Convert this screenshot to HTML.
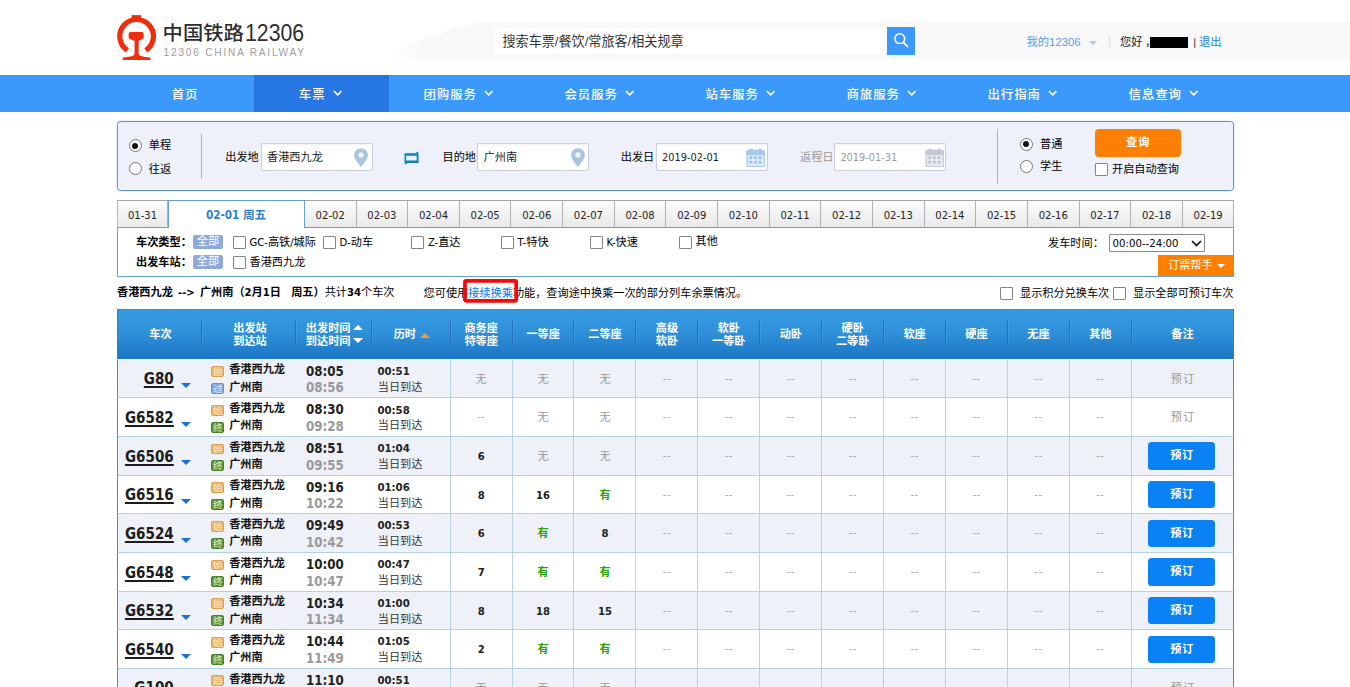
<!DOCTYPE html><html lang="zh-CN"><head><meta charset="utf-8"><title>车票预订 | 中国铁路12306</title><style>
*{box-sizing:border-box;margin:0;padding:0}
html,body{width:1350px;height:687px;overflow:hidden;background:#fff}
body{font-family:"DejaVu Sans Condensed","Liberation Sans","Noto Sans CJK SC",sans-serif;font-size:11.17px;color:#000;position:relative}
.a{position:absolute;white-space:nowrap;line-height:16px}
.ls{font-family:"Liberation Sans","Noto Sans CJK SC",sans-serif}
b,.b{font-weight:bold}
#band{left:380px;top:21.7px;width:970px;height:38px}
#sinp{left:494px;top:27.6px;width:394px;height:26.6px;background:#fff;font-size:13.1px;line-height:28.6px;padding-left:8.5px;color:#333}
#sbtn{left:887px;top:27px;width:28px;height:27.8px;background:#3b99fc}
#nav{left:0;top:75px;width:1350px;height:37px;background:#3b99fc}
#nav .on{position:absolute;left:254px;top:0;width:135px;height:37px;background:#2676e3}
#nav .i{position:absolute;top:0;height:37px;line-height:40.6px;padding-right:2px;color:#fff;font-size:12.4px;letter-spacing:0.9px;font-weight:500;text-align:center;white-space:nowrap}
#nav svg{display:inline-block;vertical-align:middle;margin-left:7.3px;position:relative;top:-2.8px}
#form{left:117px;top:121px;width:1117px;height:69.5px;background:linear-gradient(#eef1f9 0,#eef1f9 88%,#f3f4f8 100%);border:1px solid #5f95c4;border-radius:3.5px;box-shadow:0 0 1.5px rgba(95,149,196,.7)}
.radio{width:13px;height:13px;border:1px solid #767676;border-radius:50%;background:#fff}
.radio.ck:after{content:"";position:absolute;left:2.5px;top:2.5px;width:6px;height:6px;border-radius:50%;background:#111}
.cb{width:13px;height:12.6px;border:1px solid #858585;background:#fff;border-radius:1px;margin-top:0.7px}
.inp{height:27.6px;width:112px;background:#fff;border:1px solid #cbd0d8;border-radius:2px;line-height:27.6px;padding-left:5.5px;color:#222;box-shadow:inset 0 1px 2px rgba(0,0,0,.06)}
.vdiv{width:1px;background:#8fbfdc}
#tabs{left:117px;top:200px;width:1117px;height:28px}
.tab{position:absolute;top:0;height:28px;border:1px solid #b0b2b6;border-top-color:#a2a4a8;border-left:none;border-bottom:1px solid #659fce;background:linear-gradient(#fcfcfc,#e9e9e9);text-align:center;line-height:29.6px;font-size:11.17px;color:#222}
.tab.on{top:0;height:28px;background:#fff;border:1px solid #659fce;border-bottom:none;color:#2d7fcd;font-weight:bold;font-size:11.6px;line-height:29px}
#filter{left:117px;top:227.5px;width:1117px;height:49px;border:1px solid #659fce;border-top:none;background:#fff}
.all{background:#8ea9dc;color:#fff;width:30.5px;height:13.8px;line-height:13.8px;text-align:center;border-radius:2px}
#thead{left:117px;top:309.4px;width:1117px;height:50.3px;background:linear-gradient(#2e8fdb 0,#379be3 5%,#2f8fd9 48%,#1d77c5 96%,#1a72c0 100%);border-left:1px solid #2a7fc6;border-right:1px solid #2a7fc6}
.th{position:absolute;color:#fff;font-weight:bold;text-align:center;line-height:13px;white-space:nowrap;font-size:11.17px}
.hd{position:absolute;top:10.5px;height:24.5px;width:1px;background:#2670b6;box-shadow:1px 0 0 rgba(120,190,240,.22)}
.row{position:absolute;left:117px;width:1117px;height:39.65px;border-top:1px solid #b4d0e3;border-left:1.5px solid #3a8fd0;border-right:1.5px solid #3a8fd0}
.row.o{background:#eef1f8}
.row .vl{position:absolute;top:0;height:100%;width:1px;background:#b9d3e4}
.tn{position:absolute;right:1059.2px;top:9.6px;font-weight:bold;font-size:15.0px;letter-spacing:0.05px;line-height:20px;text-decoration:underline;text-decoration-thickness:1.7px;text-underline-offset:1.5px;color:#1c1c1c;white-space:nowrap}
.dd{position:absolute;left:63.3px;top:23.4px;width:0;height:0;border-left:5.3px solid transparent;border-right:5.3px solid transparent;border-top:5.6px solid #1b70d8}
.ic{position:absolute;left:93.4px;width:12.7px;height:10.9px;border-radius:2px;color:#fff;font-size:9.6px;line-height:8px;text-align:center;overflow:hidden;font-family:"Noto Sans CJK SC",sans-serif}
.ic.s{background:#ecb66c;border:1px solid #d9a050;color:#fbe6c4}
.ic.g{background:#7fa8ea;border:1px solid #6590dc;color:#e4eeff}
.ic.z{background:#5c9636;border:1px solid #47802a;color:#e2f2d0}
.st{position:absolute;left:111.2px;font-weight:bold;line-height:14px;white-space:nowrap;color:#111}
.t1{position:absolute;left:188px;top:4.0px;font-weight:bold;font-size:13.2px;line-height:16px;color:#222}
.t2{position:absolute;left:188px;top:20.8px;font-weight:bold;font-size:13.2px;line-height:16px;color:#999}
.d1{position:absolute;left:259.4px;top:5.2px;font-weight:bold;font-size:11.3px;line-height:14px;color:#222}
.d2{position:absolute;left:259.8px;top:21.0px;line-height:14px;color:#333}
.c{position:absolute;top:0;height:38.6px;line-height:39px;text-align:center;width:62px;color:#222}
.c.n{color:#999}
.c.d{color:#a8a8a8;letter-spacing:0.4px;line-height:37.4px}
.c.y{color:#26a306;font-weight:bold}
.c.k{font-weight:bold}
.bk{position:absolute;left:1030.4px;top:5.3px;width:67px;height:27.4px;background:#0a82f5;border-radius:3.5px;color:#fff;font-weight:bold;text-align:center;line-height:27.5px;letter-spacing:0.5px}
.bk0{position:absolute;left:1014px;width:102px;top:0;line-height:40.5px;text-align:center;color:#999;letter-spacing:1px}
</style></head><body>
<svg class="a" style="left:117px;top:15px" width="39" height="45" viewBox="0 0 39 45"><g fill="#f02e0f"><path d="M14.6 0.1h9.4v3h-9.4z"/><path d="M10.45 35.4A16.8 16.8 0 1 1 28.75 35.4" fill="none" stroke="#f02e0f" stroke-width="5.2"/><path d="M11.6 19Q11.6 17 13.6 17L24.7 17Q26.7 17 26.7 19L26.7 22.3Q26.7 24.3 24.5 24.6L21.7 26L21.7 39Q22 41.8 33.6 42.6L33.6 45L5.6 45L5.6 42.6Q17.3 41.8 17.6 39L17.6 26L13.8 24.6Q11.6 24.3 11.6 22.3Z"/></g></svg>
<div class="a ls" style="left:162.6px;top:18.6px;font-size:20.3px;line-height:28px;color:#2e2e2e;font-weight:500;transform:scaleY(0.93);transform-origin:0 50%">中国铁路</div>
<div class="a ls" style="left:244.6px;top:18.6px;font-size:23px;line-height:28px;color:#2e2e2e;transform:scaleX(0.925);transform-origin:0 50%">12306</div>
<div class="a ls" style="left:163.6px;top:45.4px;font-size:10.1px;line-height:16px;color:#9c9c9c;letter-spacing:1.8px">12306 CHINA RAILWAY</div>
<svg class="a" id="band" width="970" height="38" viewBox="0 0 970 38"><defs><linearGradient id="bg1" x1="0" y1="0" x2="1" y2="0"><stop offset="0" stop-color="#f8f8f8" stop-opacity="0"/><stop offset="0.035" stop-color="#f8f8f8" stop-opacity="1"/><stop offset="1" stop-color="#f8f8f8"/></linearGradient></defs><path d="M8 37.5L15 28.5C40 20 68 6 98 0L970 0L970 37.5Z" fill="url(#bg1)"/></svg>
<div class="a ls" id="sinp" style="">搜索车票/餐饮/常旅客/相关规章</div>
<div class="a" id="sbtn"><svg width="27.5" height="27.5" viewBox="0 0 27.5 27.5"><circle cx="12.8" cy="11.7" r="4.9" fill="none" stroke="#fff" stroke-width="1.5"/><path d="M16.4 15.4L20.4 19.4" stroke="#fff" stroke-width="1.8" stroke-linecap="round"/></svg></div>
<div class="a ls" style="left:1026.5px;top:33.8px;color:#5b9ee6;font-size:11.3px">我的12306</div>
<div class="a" style="left:1088.5px;top:40.5px;width:0;height:0;border-left:4.5px solid transparent;border-right:4.5px solid transparent;border-top:4.5px solid #a9c9f0"></div>
<div class="a " style="left:1108.5px;top:36px;width:1px;height:11px;background:#dcdcdc"></div>
<div class="a ls" style="left:1120px;top:33.8px;color:#222;font-size:11.3px">您好<span style="margin-left:2.4px">，</span></div>
<div class="a " style="left:1150px;top:36.6px;width:38px;height:11.3px;background:#000"></div>
<div class="a ls" style="left:1193.3px;top:33.8px;color:#333;font-size:11.3px">|</div>
<div class="a ls" style="left:1199px;top:33.8px;color:#1d82dc;font-size:11.3px">退出</div>
<div class="a" id="nav"><div class="on"></div><div class="i ls" style="left:118px;width:136px">首页</div><div class="i ls" style="left:254px;width:135px">车票<svg width="9.4" height="6.5" viewBox="0 0 9.4 6.5"><path d="M0.9 1L4.7 4.9L8.5 1" fill="none" stroke="#fff" stroke-width="1.6"/></svg></div><div class="i ls" style="left:389px;width:141px">团购服务<svg width="9.4" height="6.5" viewBox="0 0 9.4 6.5"><path d="M0.9 1L4.7 4.9L8.5 1" fill="none" stroke="#fff" stroke-width="1.6"/></svg></div><div class="i ls" style="left:530px;width:141px">会员服务<svg width="9.4" height="6.5" viewBox="0 0 9.4 6.5"><path d="M0.9 1L4.7 4.9L8.5 1" fill="none" stroke="#fff" stroke-width="1.6"/></svg></div><div class="i ls" style="left:671px;width:141px">站车服务<svg width="9.4" height="6.5" viewBox="0 0 9.4 6.5"><path d="M0.9 1L4.7 4.9L8.5 1" fill="none" stroke="#fff" stroke-width="1.6"/></svg></div><div class="i ls" style="left:812px;width:141px">商旅服务<svg width="9.4" height="6.5" viewBox="0 0 9.4 6.5"><path d="M0.9 1L4.7 4.9L8.5 1" fill="none" stroke="#fff" stroke-width="1.6"/></svg></div><div class="i ls" style="left:953px;width:141px">出行指南<svg width="9.4" height="6.5" viewBox="0 0 9.4 6.5"><path d="M0.9 1L4.7 4.9L8.5 1" fill="none" stroke="#fff" stroke-width="1.6"/></svg></div><div class="i ls" style="left:1094px;width:141px">信息查询<svg width="9.4" height="6.5" viewBox="0 0 9.4 6.5"><path d="M0.9 1L4.7 4.9L8.5 1" fill="none" stroke="#fff" stroke-width="1.6"/></svg></div></div>
<div class="a" id="form"><div class="a radio ck" style="left:10.800000000000011px;top:17.30000000000001px"></div><div class="a " style="left:30.80000000000001px;top:16.19999999999999px;">单程</div><div class="a radio" style="left:10.800000000000011px;top:39.69999999999999px"></div><div class="a " style="left:30.80000000000001px;top:39.69999999999999px;">往返</div><div class="a vdiv" style="left:82.5px;top:11.5px;width:1px;height:45px;"></div><div class="a " style="left:107.30000000000001px;top:28px;">出发地</div><div class="a inp" style="left:142.5px;top:21.19999999999999px;">香港西九龙</div><svg class="a" style="left:236.3px;top:25.599999999999994px" width="14" height="19.5" viewBox="0 0 14 19.5"><path d="M7 0.3C3.2 0.3 0.2 3.2 0.2 7C0.2 11.6 4.4 15.4 7 19C9.6 15.4 13.8 11.6 13.8 7C13.8 3.2 10.8 0.3 7 0.3Z" fill="#a9c4e0"/><circle cx="7" cy="6.9" r="2.7" fill="#eef6ff"/></svg><svg class="a" style="left:285.3px;top:28.5px" width="17" height="15" viewBox="0 0 17 15"><rect x="2.3" y="3.3" width="12.3" height="7.5" fill="none" stroke="#cdf3ff" stroke-width="4.4" opacity="0.75"/><path d="M1.6 2.2H15.4V4.7H1.6Z M1.6 9.4H15.6V11.9H1.6Z M1.6 2.2H3.1V11.9H1.6Z M13.7 2.2H15.5V11.9H13.7Z" fill="#1a7fae"/><path d="M12.6 2.2L14.4 0.4L15.8 2.2Z M4.4 11.9L2.8 13.7L1.6 11.9Z" fill="#1a7fae"/></svg><div class="a " style="left:324.5px;top:28px;">目的地</div><div class="a inp" style="left:359.2px;top:21.19999999999999px;">广州南</div><svg class="a" style="left:452.79999999999995px;top:25.599999999999994px" width="14" height="19.5" viewBox="0 0 14 19.5"><path d="M7 0.3C3.2 0.3 0.2 3.2 0.2 7C0.2 11.6 4.4 15.4 7 19C9.6 15.4 13.8 11.6 13.8 7C13.8 3.2 10.8 0.3 7 0.3Z" fill="#a9c4e0"/><circle cx="7" cy="6.9" r="2.7" fill="#eef6ff"/></svg><div class="a " style="left:502.79999999999995px;top:28px;">出发日</div><div class="a inp" style="left:537.5px;top:21.19999999999999px;font-size:10.9px">2019-02-01</div><svg class="a" style="left:628.2px;top:25.5px" width="19.5" height="19.5" viewBox="0 0 19.5 19.5"><rect x="0.9" y="2.4" width="17.6" height="16.2" rx="1.2" fill="#dcebfa" stroke="#a6c8ea" stroke-width="1.1"/><path d="M0.9 3.4Q0.9 2.2 2.1 2.2H17.3Q18.5 2.2 18.5 3.4V6.9H0.9Z" fill="#a6c8ea"/><rect x="3.6" y="0.4" width="3" height="3.4" rx="1.2" fill="#a6c8ea"/><rect x="12.6" y="0.4" width="3" height="3.4" rx="1.2" fill="#a6c8ea"/><g fill="#9dbfe2"><rect x="3.3" y="8.4" width="2.9" height="2.6"/><rect x="7.9" y="8.4" width="2.9" height="2.6"/><rect x="12.5" y="8.4" width="2.9" height="2.6"/><rect x="3.3" y="12.9" width="2.9" height="2.6"/><rect x="7.9" y="12.9" width="2.9" height="2.6"/><rect x="12.5" y="12.9" width="2.9" height="2.6"/></g></svg><div class="a " style="left:682px;top:28px;color:#999">返程日</div><div class="a inp" style="left:715.9px;top:21.19999999999999px;color:#999;font-size:10.9px">2019-01-31</div><svg class="a" style="left:806.8px;top:25.5px" width="19.5" height="19.5" viewBox="0 0 19.5 19.5"><rect x="0.9" y="2.4" width="17.6" height="16.2" rx="1.2" fill="#e6e9f0" stroke="#c3c8d4" stroke-width="1.1"/><path d="M0.9 3.4Q0.9 2.2 2.1 2.2H17.3Q18.5 2.2 18.5 3.4V6.9H0.9Z" fill="#c3c8d4"/><rect x="3.6" y="0.4" width="3" height="3.4" rx="1.2" fill="#c3c8d4"/><rect x="12.6" y="0.4" width="3" height="3.4" rx="1.2" fill="#c3c8d4"/><g fill="#bcc2cf"><rect x="3.3" y="8.4" width="2.9" height="2.6"/><rect x="7.9" y="8.4" width="2.9" height="2.6"/><rect x="12.5" y="8.4" width="2.9" height="2.6"/><rect x="3.3" y="12.9" width="2.9" height="2.6"/><rect x="7.9" y="12.9" width="2.9" height="2.6"/><rect x="12.5" y="12.9" width="2.9" height="2.6"/></g></svg><div class="a vdiv" style="left:879px;top:7px;width:1px;height:54.5px;"></div><div class="a radio ck" style="left:901.5px;top:15.5px"></div><div class="a " style="left:922px;top:14.5px;">普通</div><div class="a radio" style="left:901.5px;top:38px"></div><div class="a " style="left:922px;top:36.5px;">学生</div><div class="a " style="left:977px;top:7.400000000000006px;width:86.3px;height:27.2px;background:#ff8000;border-radius:4px;color:#fff;font-weight:bold;text-align:center;line-height:28.5px;letter-spacing:1px">查询</div><div class="a cb" style="left:977px;top:40.5px;"></div><div class="a " style="left:994px;top:39.69999999999999px;">开启自动查询</div></div>
<div class="a" id="tabs"><div class="tab" style="left:0;width:51px;border-left:1px solid #b4b7bc">01-31</div><div class="tab on" style="left:50.5px;width:137px">02-01 周五</div><div class="tab" style="left:187.90px;width:51.64px">02-02</div><div class="tab" style="left:239.54px;width:51.64px">02-03</div><div class="tab" style="left:291.19px;width:51.64px">02-04</div><div class="tab" style="left:342.83px;width:51.64px">02-05</div><div class="tab" style="left:394.48px;width:51.64px">02-06</div><div class="tab" style="left:446.12px;width:51.64px">02-07</div><div class="tab" style="left:497.77px;width:51.64px">02-08</div><div class="tab" style="left:549.41px;width:51.64px">02-09</div><div class="tab" style="left:601.06px;width:51.64px">02-10</div><div class="tab" style="left:652.70px;width:51.64px">02-11</div><div class="tab" style="left:704.34px;width:51.64px">02-12</div><div class="tab" style="left:755.99px;width:51.64px">02-13</div><div class="tab" style="left:807.63px;width:51.64px">02-14</div><div class="tab" style="left:859.28px;width:51.64px">02-15</div><div class="tab" style="left:910.92px;width:51.64px">02-16</div><div class="tab" style="left:962.57px;width:51.64px">02-17</div><div class="tab" style="left:1014.21px;width:51.64px">02-18</div><div class="tab" style="left:1065.86px;width:51.64px">02-19</div></div>
<div class="a" id="filter"><div class="a " style="left:18px;top:7.300000000000011px;font-weight:bold">车次类型：</div><div class="a all" style="left:74.69999999999999px;top:7.5px;">全部</div><div class="a cb" style="left:115px;top:8.199999999999989px;"></div><div class="a " style="left:131.5px;top:7.300000000000011px;">GC-高铁/城际</div><div class="a cb" style="left:205px;top:8.199999999999989px;"></div><div class="a " style="left:221.5px;top:7.300000000000011px;">D-动车</div><div class="a cb" style="left:293.4px;top:8.199999999999989px;"></div><div class="a " style="left:309.9px;top:7.300000000000011px;">Z-直达</div><div class="a cb" style="left:383px;top:8.199999999999989px;"></div><div class="a " style="left:399.5px;top:7.300000000000011px;">T-特快</div><div class="a cb" style="left:472px;top:8.199999999999989px;"></div><div class="a " style="left:488.5px;top:7.300000000000011px;">K-快速</div><div class="a cb" style="left:561.1px;top:8.199999999999989px;"></div><div class="a " style="left:577.6px;top:6.100000000000011px;">其他</div><div class="a " style="left:18px;top:27.30000000000001px;font-weight:bold">出发车站：</div><div class="a all" style="left:74.69999999999999px;top:27.5px;">全部</div><div class="a cb" style="left:115px;top:28.19999999999999px;"></div><div class="a " style="left:131.5px;top:27.30000000000001px;">香港西九龙</div><div class="a " style="left:930px;top:8.5px;">发车时间：</div><div class="a " style="left:990.5999999999999px;top:6.5px;width:96px;height:17.6px;border:1px solid #8a8a8a;background:#fff;font-size:11.3px;line-height:17px;padding-left:3px;border-radius:1px">00:00--24:00<svg style="position:absolute;left:81px;top:5px" width="11" height="7" viewBox="0 0 11 7"><path d="M1 1L5.5 5.5L10 1" fill="none" stroke="#111" stroke-width="1.7"/></svg></div><div class="a " style="left:1040px;top:27.5px;width:75px;height:20.8px;background:#ff8000;color:#fff;line-height:21px;padding-left:10px;letter-spacing:0px">订票帮手<span style="position:absolute;left:59px;top:8.5px;width:0;height:0;border-left:4.5px solid transparent;border-right:4.5px solid transparent;border-top:4.5px solid #fff"></span></div></div>
<div class="a " style="left:117px;top:285px;font-weight:bold;word-spacing:1.7px">香港西九龙 --&gt; 广州南（2月1日&nbsp; 周五）<span style="font-weight:normal">共计</span>34<span style="font-weight:normal">个车次</span></div>
<div class="a " style="left:423.6px;top:285.7px;">您可使用<span style="color:#0077ff">接续换乘</span>功能，查询途中换乘一次的部分列车余票情况。</div>
<svg class="a" style="left:461px;top:277px" width="60" height="28" viewBox="0 0 60 28"><rect x="4" y="3.8" width="51.2" height="20" rx="1.2" fill="none" stroke="#f80808" stroke-width="3.8"/></svg>
<div class="a cb" style="left:1000px;top:286.5px;"></div>
<div class="a " style="left:1020px;top:286px;">显示积分兑换车次</div>
<div class="a cb" style="left:1113px;top:286.5px;"></div>
<div class="a " style="left:1133px;top:286px;">显示全部可预订车次</div>
<div class="a" id="thead"><div class="hd" style="left:82.8px"></div><div class="hd" style="left:176.8px"></div><div class="hd" style="left:253.3px"></div><div class="hd" style="left:332.0px"></div><div class="hd" style="left:394.0px"></div><div class="hd" style="left:455.0px"></div><div class="hd" style="left:517.0px"></div><div class="hd" style="left:579.0px"></div><div class="hd" style="left:641.0px"></div><div class="hd" style="left:703.0px"></div><div class="hd" style="left:765.0px"></div><div class="hd" style="left:827.0px"></div><div class="hd" style="left:889.0px"></div><div class="hd" style="left:951.0px"></div><div class="hd" style="left:1013.0px"></div><div class="th" style="left:-7.5px;top:19.0px;width:100px;">车次</div><div class="th" style="left:82.0px;top:12.2px;width:100px;">出发站<br>到达站</div><div class="th" style="left:166.2px;top:12.2px;width:100px;">出发时间<span style="display:inline-block;width:0;height:0;border-left:5.1px solid transparent;border-right:5.1px solid transparent;border-bottom:5.6px solid #fff;vertical-align:1.4px;margin-left:2px"></span><br>到达时间<span style="display:inline-block;width:0;height:0;border-left:5.1px solid transparent;border-right:5.1px solid transparent;border-top:5.6px solid #fff;vertical-align:1.5px;margin-left:2px"></span></div><div class="th" style="left:243.6px;top:19.0px;width:100px;">历时<span style="display:inline-block;width:0;height:0;border-left:5.1px solid transparent;border-right:5.1px solid transparent;border-bottom:5.6px solid #f5983c;vertical-align:0.6px;margin-left:3.5px"></span></div><div class="th" style="left:313.2px;top:12.2px;width:100px;">商务座<br>特等座</div><div class="th" style="left:375.1px;top:19.0px;width:100px;">一等座</div><div class="th" style="left:437.0px;top:19.0px;width:100px;">二等座</div><div class="th" style="left:498.9px;top:12.2px;width:100px;">高级<br>软卧</div><div class="th" style="left:560.8px;top:12.2px;width:100px;">软卧<br>一等卧</div><div class="th" style="left:622.8px;top:19.0px;width:100px;">动卧</div><div class="th" style="left:684.7px;top:12.2px;width:100px;">硬卧<br>二等卧</div><div class="th" style="left:746.6px;top:19.0px;width:100px;">软座</div><div class="th" style="left:808.5px;top:19.0px;width:100px;">硬座</div><div class="th" style="left:870.4px;top:19.0px;width:100px;">无座</div><div class="th" style="left:932.3px;top:19.0px;width:100px;">其他</div><div class="th" style="left:1014.5px;top:19.0px;width:100px;">备注</div></div>
<div class="row o" style="top:358.70px;border-top-color:transparent"><div class="vl" style="left:332px"></div><div class="vl" style="left:394px"></div><div class="vl" style="left:455px"></div><div class="vl" style="left:517px"></div><div class="vl" style="left:579px"></div><div class="vl" style="left:641px"></div><div class="vl" style="left:703px"></div><div class="vl" style="left:765px"></div><div class="vl" style="left:827px"></div><div class="vl" style="left:889px"></div><div class="vl" style="left:951px"></div><div class="vl" style="left:1013px"></div><div class="tn">G80</div><div class="dd"></div><div class="ic s" style="top:6.6px">始</div><div class="st" style="top:3.8px">香港西九龙</div><div class="ic g" style="top:23.4px">过</div><div class="st" style="top:21px">广州南</div><div class="t1">08:05</div><div class="t2">08:56</div><div class="d1">00:51</div><div class="d2">当日到达</div><div class="c n" style="left:332.2px">无</div><div class="c n" style="left:394.1px">无</div><div class="c n" style="left:456.0px">无</div><div class="c d" style="left:517.9px">--</div><div class="c d" style="left:579.8px">--</div><div class="c d" style="left:641.8px">--</div><div class="c d" style="left:703.7px">--</div><div class="c d" style="left:765.6px">--</div><div class="c d" style="left:827.5px">--</div><div class="c d" style="left:889.4px">--</div><div class="c d" style="left:951.3px">--</div><div class="bk0">预订</div></div>
<div class="row" style="top:397.35px"><div class="vl" style="left:332px"></div><div class="vl" style="left:394px"></div><div class="vl" style="left:455px"></div><div class="vl" style="left:517px"></div><div class="vl" style="left:579px"></div><div class="vl" style="left:641px"></div><div class="vl" style="left:703px"></div><div class="vl" style="left:765px"></div><div class="vl" style="left:827px"></div><div class="vl" style="left:889px"></div><div class="vl" style="left:951px"></div><div class="vl" style="left:1013px"></div><div class="tn">G6582</div><div class="dd"></div><div class="ic s" style="top:6.6px">始</div><div class="st" style="top:3.8px">香港西九龙</div><div class="ic z" style="top:23.4px">终</div><div class="st" style="top:21px">广州南</div><div class="t1">08:30</div><div class="t2">09:28</div><div class="d1">00:58</div><div class="d2">当日到达</div><div class="c d" style="left:332.2px">--</div><div class="c n" style="left:394.1px">无</div><div class="c n" style="left:456.0px">无</div><div class="c d" style="left:517.9px">--</div><div class="c d" style="left:579.8px">--</div><div class="c d" style="left:641.8px">--</div><div class="c d" style="left:703.7px">--</div><div class="c d" style="left:765.6px">--</div><div class="c d" style="left:827.5px">--</div><div class="c d" style="left:889.4px">--</div><div class="c d" style="left:951.3px">--</div><div class="bk0">预订</div></div>
<div class="row o" style="top:436.00px"><div class="vl" style="left:332px"></div><div class="vl" style="left:394px"></div><div class="vl" style="left:455px"></div><div class="vl" style="left:517px"></div><div class="vl" style="left:579px"></div><div class="vl" style="left:641px"></div><div class="vl" style="left:703px"></div><div class="vl" style="left:765px"></div><div class="vl" style="left:827px"></div><div class="vl" style="left:889px"></div><div class="vl" style="left:951px"></div><div class="vl" style="left:1013px"></div><div class="tn">G6506</div><div class="dd"></div><div class="ic s" style="top:6.6px">始</div><div class="st" style="top:3.8px">香港西九龙</div><div class="ic z" style="top:23.4px">终</div><div class="st" style="top:21px">广州南</div><div class="t1">08:51</div><div class="t2">09:55</div><div class="d1">01:04</div><div class="d2">当日到达</div><div class="c k" style="left:332.2px">6</div><div class="c n" style="left:394.1px">无</div><div class="c n" style="left:456.0px">无</div><div class="c d" style="left:517.9px">--</div><div class="c d" style="left:579.8px">--</div><div class="c d" style="left:641.8px">--</div><div class="c d" style="left:703.7px">--</div><div class="c d" style="left:765.6px">--</div><div class="c d" style="left:827.5px">--</div><div class="c d" style="left:889.4px">--</div><div class="c d" style="left:951.3px">--</div><div class="bk">预订</div></div>
<div class="row" style="top:474.65px"><div class="vl" style="left:332px"></div><div class="vl" style="left:394px"></div><div class="vl" style="left:455px"></div><div class="vl" style="left:517px"></div><div class="vl" style="left:579px"></div><div class="vl" style="left:641px"></div><div class="vl" style="left:703px"></div><div class="vl" style="left:765px"></div><div class="vl" style="left:827px"></div><div class="vl" style="left:889px"></div><div class="vl" style="left:951px"></div><div class="vl" style="left:1013px"></div><div class="tn">G6516</div><div class="dd"></div><div class="ic s" style="top:6.6px">始</div><div class="st" style="top:3.8px">香港西九龙</div><div class="ic z" style="top:23.4px">终</div><div class="st" style="top:21px">广州南</div><div class="t1">09:16</div><div class="t2">10:22</div><div class="d1">01:06</div><div class="d2">当日到达</div><div class="c k" style="left:332.2px">8</div><div class="c k" style="left:394.1px">16</div><div class="c y" style="left:456.0px">有</div><div class="c d" style="left:517.9px">--</div><div class="c d" style="left:579.8px">--</div><div class="c d" style="left:641.8px">--</div><div class="c d" style="left:703.7px">--</div><div class="c d" style="left:765.6px">--</div><div class="c d" style="left:827.5px">--</div><div class="c d" style="left:889.4px">--</div><div class="c d" style="left:951.3px">--</div><div class="bk">预订</div></div>
<div class="row o" style="top:513.30px"><div class="vl" style="left:332px"></div><div class="vl" style="left:394px"></div><div class="vl" style="left:455px"></div><div class="vl" style="left:517px"></div><div class="vl" style="left:579px"></div><div class="vl" style="left:641px"></div><div class="vl" style="left:703px"></div><div class="vl" style="left:765px"></div><div class="vl" style="left:827px"></div><div class="vl" style="left:889px"></div><div class="vl" style="left:951px"></div><div class="vl" style="left:1013px"></div><div class="tn">G6524</div><div class="dd"></div><div class="ic s" style="top:6.6px">始</div><div class="st" style="top:3.8px">香港西九龙</div><div class="ic z" style="top:23.4px">终</div><div class="st" style="top:21px">广州南</div><div class="t1">09:49</div><div class="t2">10:42</div><div class="d1">00:53</div><div class="d2">当日到达</div><div class="c k" style="left:332.2px">6</div><div class="c y" style="left:394.1px">有</div><div class="c k" style="left:456.0px">8</div><div class="c d" style="left:517.9px">--</div><div class="c d" style="left:579.8px">--</div><div class="c d" style="left:641.8px">--</div><div class="c d" style="left:703.7px">--</div><div class="c d" style="left:765.6px">--</div><div class="c d" style="left:827.5px">--</div><div class="c d" style="left:889.4px">--</div><div class="c d" style="left:951.3px">--</div><div class="bk">预订</div></div>
<div class="row" style="top:551.95px"><div class="vl" style="left:332px"></div><div class="vl" style="left:394px"></div><div class="vl" style="left:455px"></div><div class="vl" style="left:517px"></div><div class="vl" style="left:579px"></div><div class="vl" style="left:641px"></div><div class="vl" style="left:703px"></div><div class="vl" style="left:765px"></div><div class="vl" style="left:827px"></div><div class="vl" style="left:889px"></div><div class="vl" style="left:951px"></div><div class="vl" style="left:1013px"></div><div class="tn">G6548</div><div class="dd"></div><div class="ic s" style="top:6.6px">始</div><div class="st" style="top:3.8px">香港西九龙</div><div class="ic z" style="top:23.4px">终</div><div class="st" style="top:21px">广州南</div><div class="t1">10:00</div><div class="t2">10:47</div><div class="d1">00:47</div><div class="d2">当日到达</div><div class="c k" style="left:332.2px">7</div><div class="c y" style="left:394.1px">有</div><div class="c y" style="left:456.0px">有</div><div class="c d" style="left:517.9px">--</div><div class="c d" style="left:579.8px">--</div><div class="c d" style="left:641.8px">--</div><div class="c d" style="left:703.7px">--</div><div class="c d" style="left:765.6px">--</div><div class="c d" style="left:827.5px">--</div><div class="c d" style="left:889.4px">--</div><div class="c d" style="left:951.3px">--</div><div class="bk">预订</div></div>
<div class="row o" style="top:590.60px"><div class="vl" style="left:332px"></div><div class="vl" style="left:394px"></div><div class="vl" style="left:455px"></div><div class="vl" style="left:517px"></div><div class="vl" style="left:579px"></div><div class="vl" style="left:641px"></div><div class="vl" style="left:703px"></div><div class="vl" style="left:765px"></div><div class="vl" style="left:827px"></div><div class="vl" style="left:889px"></div><div class="vl" style="left:951px"></div><div class="vl" style="left:1013px"></div><div class="tn">G6532</div><div class="dd"></div><div class="ic s" style="top:6.6px">始</div><div class="st" style="top:3.8px">香港西九龙</div><div class="ic z" style="top:23.4px">终</div><div class="st" style="top:21px">广州南</div><div class="t1">10:34</div><div class="t2">11:34</div><div class="d1">01:00</div><div class="d2">当日到达</div><div class="c k" style="left:332.2px">8</div><div class="c k" style="left:394.1px">18</div><div class="c k" style="left:456.0px">15</div><div class="c d" style="left:517.9px">--</div><div class="c d" style="left:579.8px">--</div><div class="c d" style="left:641.8px">--</div><div class="c d" style="left:703.7px">--</div><div class="c d" style="left:765.6px">--</div><div class="c d" style="left:827.5px">--</div><div class="c d" style="left:889.4px">--</div><div class="c d" style="left:951.3px">--</div><div class="bk">预订</div></div>
<div class="row" style="top:629.25px"><div class="vl" style="left:332px"></div><div class="vl" style="left:394px"></div><div class="vl" style="left:455px"></div><div class="vl" style="left:517px"></div><div class="vl" style="left:579px"></div><div class="vl" style="left:641px"></div><div class="vl" style="left:703px"></div><div class="vl" style="left:765px"></div><div class="vl" style="left:827px"></div><div class="vl" style="left:889px"></div><div class="vl" style="left:951px"></div><div class="vl" style="left:1013px"></div><div class="tn">G6540</div><div class="dd"></div><div class="ic s" style="top:6.6px">始</div><div class="st" style="top:3.8px">香港西九龙</div><div class="ic z" style="top:23.4px">终</div><div class="st" style="top:21px">广州南</div><div class="t1">10:44</div><div class="t2">11:49</div><div class="d1">01:05</div><div class="d2">当日到达</div><div class="c k" style="left:332.2px">2</div><div class="c y" style="left:394.1px">有</div><div class="c y" style="left:456.0px">有</div><div class="c d" style="left:517.9px">--</div><div class="c d" style="left:579.8px">--</div><div class="c d" style="left:641.8px">--</div><div class="c d" style="left:703.7px">--</div><div class="c d" style="left:765.6px">--</div><div class="c d" style="left:827.5px">--</div><div class="c d" style="left:889.4px">--</div><div class="c d" style="left:951.3px">--</div><div class="bk">预订</div></div>
<div class="row o" style="top:667.90px"><div class="vl" style="left:332px"></div><div class="vl" style="left:394px"></div><div class="vl" style="left:455px"></div><div class="vl" style="left:517px"></div><div class="vl" style="left:579px"></div><div class="vl" style="left:641px"></div><div class="vl" style="left:703px"></div><div class="vl" style="left:765px"></div><div class="vl" style="left:827px"></div><div class="vl" style="left:889px"></div><div class="vl" style="left:951px"></div><div class="vl" style="left:1013px"></div><div class="tn">G100</div><div class="dd"></div><div class="ic s" style="top:6.6px">始</div><div class="st" style="top:3.8px">香港西九龙</div><div class="ic z" style="top:23.4px">终</div><div class="st" style="top:21px">广州南</div><div class="t1">11:10</div><div class="t2">12:01</div><div class="d1">00:51</div><div class="d2">当日到达</div><div class="c n" style="left:332.2px">无</div><div class="c n" style="left:394.1px">无</div><div class="c n" style="left:456.0px">无</div><div class="c d" style="left:517.9px">--</div><div class="c d" style="left:579.8px">--</div><div class="c d" style="left:641.8px">--</div><div class="c d" style="left:703.7px">--</div><div class="c d" style="left:765.6px">--</div><div class="c d" style="left:827.5px">--</div><div class="c d" style="left:889.4px">--</div><div class="c d" style="left:951.3px">--</div><div class="bk0">预订</div></div>
</body></html>
